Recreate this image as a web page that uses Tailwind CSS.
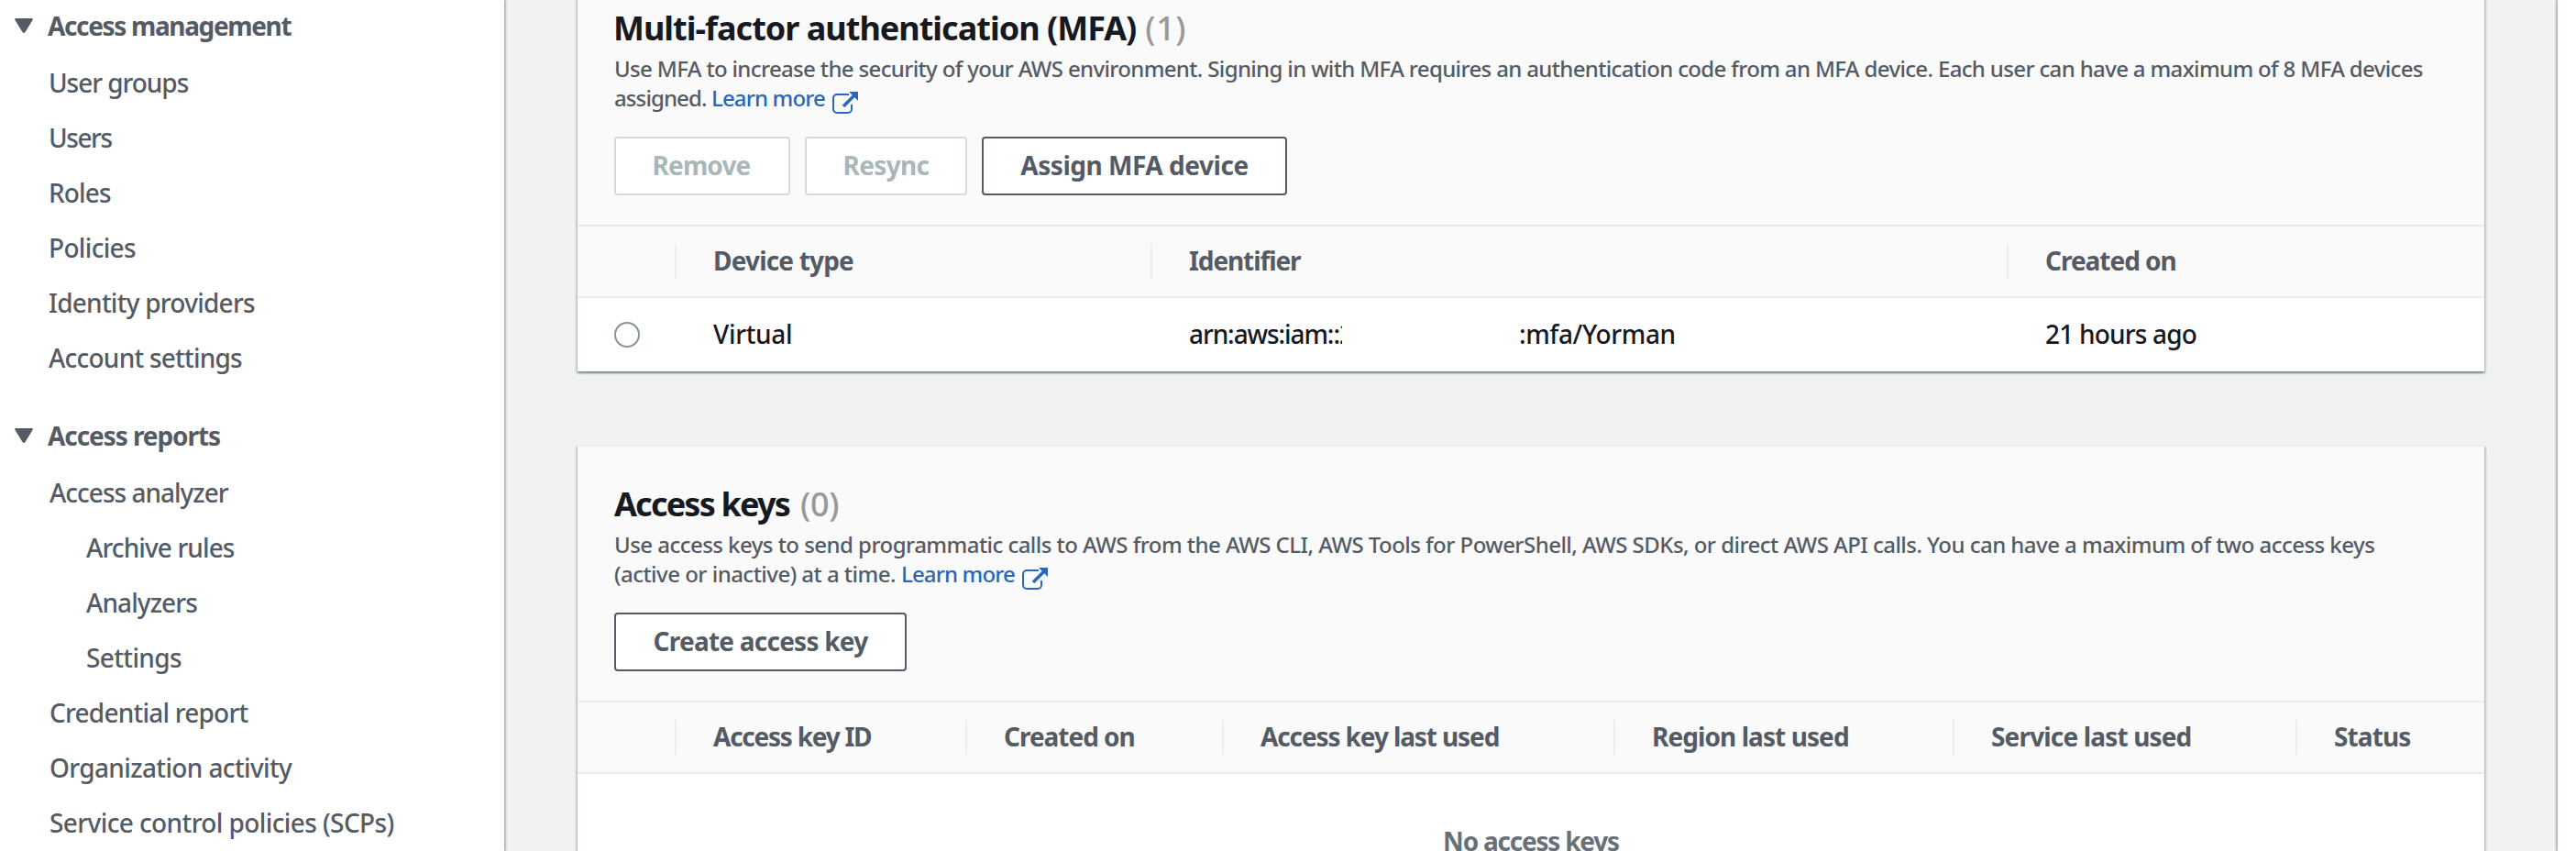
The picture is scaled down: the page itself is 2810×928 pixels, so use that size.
<!DOCTYPE html>
<html lang="en">
<head>
<meta charset="utf-8">
<title>Security credentials</title>
<script src="https://cdn.jsdelivr.net/npm/@tailwindcss/browser@4"></script>
</head>
<body class="flex h-[928px] w-[2810px] overflow-hidden whitespace-nowrap bg-[#f1f3f3] font-['Noto_Sans',sans-serif] text-[28px] font-medium text-[#545b64]">

<!-- Side navigation -->
<nav class="h-full w-[550px] shrink-0 bg-white pt-2 shadow-[2px_0_2px_rgba(0,28,36,.3)]">
  <div class="flex h-10 items-center pl-4 font-bold">
    <svg class="h-4 w-5" viewBox="0 0 20 16" fill="#545b64"><path d="M1.5 0h17q2 0 1 2L11.500 15q-1.500 2-3 0L.5 2q-1-2 1-2z"/></svg>
    <span class="ml-4 tracking-[-1.35px]">Access management</span>
  </div>
  <ul class="mt-3 pl-[53px] leading-[60px]">
    <li class="tracking-[-1.05px]">User groups</li>
    <li class="tracking-[-1.42px]">Users</li>
    <li class="tracking-[-0.86px]">Roles</li>
    <li class="tracking-[-0.67px]">Policies</li>
    <li class="tracking-[-0.75px]">Identity providers</li>
    <li class="tracking-[-0.77px]">Account settings</li>
  </ul>
  <div class="mt-[35px] flex h-10 items-center pl-4 font-bold">
    <svg class="h-4 w-5" viewBox="0 0 20 16" fill="#545b64"><path d="M1.5 0h17q2 0 1 2L11.500 15q-1.500 2-3 0L.5 2q-1-2 1-2z"/></svg>
    <span class="ml-4 tracking-[-1.07px]">Access reports</span>
  </div>
  <ul class="mt-3 pl-[54px] leading-[60px]">
    <li class="tracking-[-1px]">Access analyzer</li>
    <li class="pl-10 tracking-[-0.9px]">Archive rules</li>
    <li class="pl-10 tracking-[-0.92px]">Analyzers</li>
    <li class="pl-10 tracking-[-0.63px]">Settings</li>
    <li class="tracking-[-0.78px]">Credential report</li>
    <li class="tracking-[-0.63px]">Organization activity</li>
    <li class="tracking-[-0.6px]">Service control policies (SCPs)</li>
  </ul>
</nav>

<!-- Content -->
<main class="h-full flex-1 overflow-hidden px-20">
  <section class="-mt-2 bg-white shadow-[0_2px_2px_rgba(0,28,36,.3),2px_2px_2px_rgba(0,28,36,.15),-2px_2px_2px_rgba(0,28,36,.15)]">
    <header class="bg-[#fafafa] px-10 pt-[17px] pb-8">
      <h2 class="-ml-px flex text-[36px] leading-[44px] text-[#16191f]">
        <span class="font-bold tracking-[-0.99px]">Multi-factor authentication (MFA)</span>
        <span class="ml-[10px] tracking-[0.6px] text-[#999]">(1)</span>
      </h2>
      <p class="mt-1.5 text-2xl leading-8">
        <span class="tracking-[-0.65px]">Use MFA to increase the security of your AWS environment. Signing in with MFA requires an authentication code from an MFA device. Each user can have a maximum of 8 MFA devices</span><br>
        <span class="flex"><span class="w-[106px] tracking-[-0.89px]">assigned.</span><a class="flex tracking-[-0.87px] text-[#2a67b8]">Learn more<svg class="mt-[9px] ml-2 h-6 w-7" viewBox="0 0 28 24" fill="none" stroke="currentColor" stroke-width="2"><path d="M18 3H5a4 4 0 0 0-4 4v12a4 4 0 0 0 4 4h12a4 4 0 0 0 4-4v-5"/><path d="M12 16L24 4" stroke-width="3.500"/><path d="M18 0h10v10z" fill="currentColor" stroke="none"/></svg></a></span>
      </p>
      <div class="mt-[25px] flex gap-4 font-bold leading-[58px]">
        <button class="h-16 w-48 rounded border-2 border-[#d5dbdb] bg-white pr-0.5 pb-0.5 tracking-[-0.86px] text-[#aab7b8]">Remove</button>
        <button class="h-16 w-[177px] rounded border-2 border-[#d5dbdb] bg-white pb-0.5 tracking-[-0.67px] text-[#aab7b8]">Resync</button>
        <button class="h-16 w-[333px] rounded border-2 border-[#545b64] bg-white pb-0.5 tracking-[-0.47px]">Assign MFA device</button>
      </div>
    </header>
    <div class="grid h-20 grid-cols-[106px_519px_934px_1fr] items-center border-y-2 border-[#eaeded] bg-[#fafafa] font-bold leading-[36px]">
      <span></span>
      <span class="h-[38px] border-l-2 border-[#eaeded] pl-10 tracking-[-0.83px]">Device type</span>
      <span class="h-[38px] border-l-2 border-[#eaeded] pl-10 tracking-[-1.1px]">Identifier</span>
      <span class="h-[38px] border-l-2 border-[#eaeded] pl-10 tracking-[-1.02px]">Created on</span>
    </div>
    <div class="grid h-20 grid-cols-[148px_519px_934px_1fr] items-center text-[#16191f]">
      <span class="ml-10 size-7 rounded-full border-2 border-[#879596]"></span>
      <span class="-mt-0.5 tracking-[-0.32px]">Virtual</span>
      <span class="-mt-0.5 flex"><span class="w-[167px] overflow-hidden tracking-[-1.1px]">arn:aws:iam::2</span><span class="ml-[193px] tracking-[-0.38px]">:mfa/Yorman</span></span>
      <span class="-mt-0.5 tracking-[-0.8px]">21 hours ago</span>
    </div>
  </section>

  <section class="mt-20 h-[520px] border-t-2 border-[#eaeded] bg-white shadow-[0_2px_2px_rgba(0,28,36,.3),2px_2px_2px_rgba(0,28,36,.15),-2px_2px_2px_rgba(0,28,36,.15)]">
    <header class="bg-[#fafafa] px-10 pt-[41px] pb-8">
      <h2 class="flex text-[36px] leading-[44px] text-[#16191f]">
        <span class="font-bold tracking-[-1.8px]">Access keys</span>
        <span class="ml-3 tracking-[-0.3px] text-[#999]">(0)</span>
      </h2>
      <p class="mt-1.5 text-2xl leading-8">
        <span class="tracking-[-0.54px]">Use access keys to send programmatic calls to AWS from the AWS CLI, AWS Tools for PowerShell, AWS SDKs, or direct AWS API calls. You can have a maximum of two access keys</span><br>
        <span class="flex"><span class="w-[313px] tracking-[-0.52px]">(active or inactive) at a time.</span><a class="flex tracking-[-0.87px] text-[#2a67b8]">Learn more<svg class="mt-[9px] ml-2 h-6 w-7" viewBox="0 0 28 24" fill="none" stroke="currentColor" stroke-width="2"><path d="M18 3H5a4 4 0 0 0-4 4v12a4 4 0 0 0 4 4h12a4 4 0 0 0 4-4v-5"/><path d="M12 16L24 4" stroke-width="3.500"/><path d="M18 0h10v10z" fill="currentColor" stroke="none"/></svg></a></span>
      </p>
      <div class="mt-[25px] flex font-bold leading-[58px]">
        <button class="h-16 w-[319px] rounded border-2 border-[#545b64] bg-white pb-0.5 tracking-[-0.77px]">Create access key</button>
      </div>
    </header>
    <div class="grid h-20 grid-cols-[106px_317px_280px_427px_370px_374px_1fr] items-center border-y-2 border-[#eaeded] bg-[#fafafa] font-bold leading-[36px]">
      <span></span>
      <span class="h-[38px] border-l-2 border-[#eaeded] pl-10 tracking-[-1.25px]">Access key ID</span>
      <span class="h-[38px] border-l-2 border-[#eaeded] pl-10 tracking-[-1.02px]">Created on</span>
      <span class="h-[38px] border-l-2 border-[#eaeded] pl-10 tracking-[-1.11px]">Access key last used</span>
      <span class="h-[38px] border-l-2 border-[#eaeded] pl-10 tracking-[-0.92px]">Region last used</span>
      <span class="h-[38px] border-l-2 border-[#eaeded] pl-10 tracking-[-0.84px]">Service last used</span>
      <span class="h-[38px] border-l-2 border-[#eaeded] pl-10 tracking-[-0.9px]">Status</span>
    </div>
    <p class="pt-[51px] text-center font-bold leading-[44px] tracking-[-1.22px] text-[#687078]">No access keys</p>
  </section>
</main>

<!-- Collapsed help panel -->
<aside class="h-full w-5 shrink-0 bg-white shadow-[-2px_0_2px_rgba(0,28,36,.3)]"></aside>
</body>
</html>
